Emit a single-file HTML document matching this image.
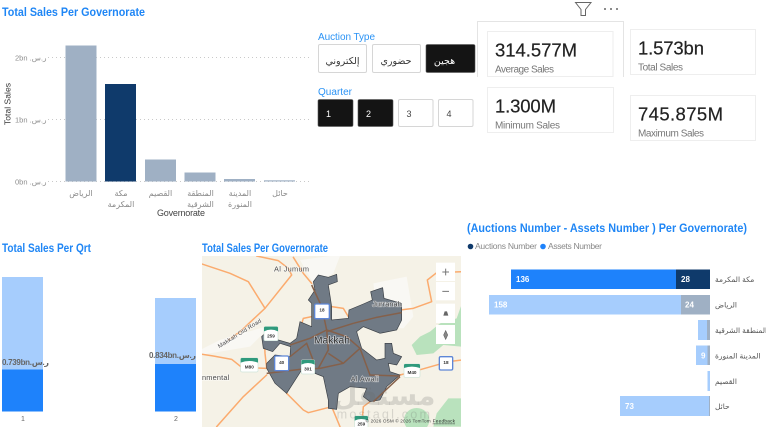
<!DOCTYPE html>
<html><head><meta charset="utf-8">
<style>
html,body{margin:0;padding:0;background:#fff;width:766px;height:430px;overflow:hidden}
svg{display:block}
text{font-family:"Liberation Sans","Noto Sans CJK SC","DejaVu Sans",sans-serif}
.t{font-weight:700;font-size:11.5px;fill:#1f86f5}
.ar{font-size:8px;fill:#8a8a8a}
.big{font-size:18.5px;fill:#222;font-weight:400;stroke:#222;stroke-width:.2}
.sub{font-size:10px;fill:#777}
.card{fill:#fff;stroke:#eeeeee;stroke-width:1}
.btn{fill:#fff;stroke:#d6d6d6;stroke-width:1}
.blk{fill:#141414;stroke:#555;stroke-width:.6}
.road{fill:none;stroke:#fbab6e;stroke-width:4.5;stroke-linejoin:round;stroke-linecap:round}
.in{fill:none;stroke:#85604a;stroke-width:4.5}
</style></head>
<body>
<svg width="766" height="430" viewBox="0 0 766 430" xmlns="http://www.w3.org/2000/svg">
<rect width="766" height="430" fill="#fff"/>

<!-- Chart 1 -->
<text class="t" x="2" y="16" textLength="143" lengthAdjust="spacingAndGlyphs">Total Sales Per Governorate</text>
<g stroke="#c9c9c9" stroke-width="1" stroke-dasharray="1 3">
<line x1="48" x2="311" y1="57.5" y2="57.5"/><line x1="48" x2="311" y1="119.5" y2="119.5"/><line x1="48" x2="311" y1="181.5" y2="181.5"/>
</g>
<g font-size="7.5" fill="#8d8d8d">
<text x="15" y="60.5">2bn .ر.س</text><text x="15" y="122.5">1bn .ر.س</text><text x="15" y="184.5">0bn .ر.س</text>
</g>
<text transform="translate(10.5,125) rotate(-90)" font-size="8.5" fill="#333" textLength="42">Total Sales</text>
<g fill="#9fb0c4">
<rect x="65.5" y="45.5" width="31" height="136"/>
<rect x="145" y="159.5" width="31" height="22"/>
<rect x="184.5" y="172.5" width="31" height="9"/>
<rect x="224" y="179" width="31" height="2.5"/>
<rect x="264" y="180.3" width="31" height="1.2"/>
</g>
<rect x="105" y="84" width="31" height="97.5" fill="#0f3a6b"/>
<g class="ar" text-anchor="middle">
<text x="81" y="196">الرياض</text>
<text x="121" y="196">مكة</text><text x="121" y="207">المكرمة</text>
<text x="160.5" y="196">القصيم</text>
<text x="200.5" y="196">المنطقة</text><text x="200.5" y="207">الشرقية</text>
<text x="240" y="196">المدينة</text><text x="240" y="207">المنورة</text>
<text x="280" y="196">حائل</text>
</g>
<text x="157" y="216" font-size="9" fill="#444" textLength="48">Governorate</text>

<!-- Top icons -->
<path d="M575.5 2.5H591L585.5 9.5V15.5H581V9.5Z" fill="none" stroke="#666" stroke-width="1"/>
<g fill="#666"><circle cx="605" cy="9" r="1"/><circle cx="611" cy="9" r="1"/><circle cx="617" cy="9" r="1"/></g>

<!-- Slicers -->
<text x="318" y="40" font-size="10" fill="#2b93f5" textLength="57">Auction Type</text>
<rect class="btn" x="318.5" y="44.5" width="48" height="28" rx="1.5"/>
<rect class="btn" x="372.5" y="44.5" width="48" height="28" rx="1.5"/>
<rect class="blk" x="426" y="44.5" width="49" height="28" rx="1.5"/>
<g font-size="9.5" text-anchor="middle">
<text x="342.5" y="64" fill="#333">إلكتروني</text>
<text x="396" y="64" fill="#333">حضوري</text>
<text x="444.5" y="64" fill="#fff">هجين</text>
</g>
<text x="318" y="95" font-size="10" fill="#2b93f5" textLength="34">Quarter</text>
<rect class="blk" x="318" y="99.5" width="35" height="27" rx="1.5"/>
<rect class="blk" x="358" y="99.5" width="35" height="27" rx="1.5"/>
<rect class="btn" x="398.5" y="99.5" width="34.5" height="27" rx="1.5"/>
<rect class="btn" x="438.5" y="99.5" width="34.5" height="27" rx="1.5"/>
<g font-size="9" text-anchor="middle">
<text x="328.5" y="117" fill="#fff">1</text><text x="368.5" y="117" fill="#fff">2</text>
<text x="409" y="117" fill="#444">3</text><text x="449" y="117" fill="#444">4</text>
</g>

<!-- Cards -->
<path d="M477.5 77V21.5H623.5V77" fill="none" stroke="#e4e4e4"/>
<rect class="card" x="487.5" y="31.5" width="125.5" height="45"/>
<rect class="card" x="630.5" y="29.5" width="125" height="45"/>
<rect class="card" x="487.5" y="87.5" width="126" height="45"/>
<rect class="card" x="630.5" y="95.5" width="125" height="45"/>
<text class="big" x="495" y="56.500" textLength="82">314.577M</text>
<text class="sub" x="495" y="72.500" textLength="59">Average Sales</text>
<text class="big" x="638" y="54.500" textLength="66">1.573bn</text>
<text class="sub" x="638" y="70.500" textLength="45">Total Sales</text>
<text class="big" x="495" y="112.500" textLength="61">1.300M</text>
<text class="sub" x="495" y="128.500" textLength="65">Minimum Sales</text>
<text class="big" x="638" y="120.500" textLength="85">745.875M</text>
<text class="sub" x="638" y="136.500" textLength="66">Maximum Sales</text>

<!-- Qrt chart -->
<text class="t" x="2" y="252" textLength="89" lengthAdjust="spacingAndGlyphs">Total Sales Per Qrt</text>
<rect x="2" y="277" width="41" height="92.500" fill="#a6cdfd"/>
<rect x="2" y="369.500" width="41" height="42" fill="#1e82fb"/>
<rect x="155" y="298" width="41" height="66" fill="#a6cdfd"/>
<rect x="155" y="364" width="41" height="47.500" fill="#1e82fb"/>
<text x="2" y="365" font-size="8" font-weight="700" fill="#666" textLength="47">0.739bn.ر.س</text>
<text x="149" y="358" font-size="8" font-weight="700" fill="#666" textLength="47">0.834bn.ر.س</text>
<text x="23" y="421" font-size="7" fill="#666" text-anchor="middle">1</text>
<text x="176" y="421" font-size="7" fill="#666" text-anchor="middle">2</text>

<!-- Map -->
<text class="t" x="202" y="252" textLength="126" lengthAdjust="spacingAndGlyphs">Total Sales Per Governorate</text>
<clipPath id="m"><rect x="202" y="256" width="259" height="171"/></clipPath>
<g clip-path="url(#m)">
<rect x="202" y="256" width="259" height="171" fill="#f5f2e7"/>
<g transform="translate(200,240) scale(.33333)">
 <path d="M390 48L420 48 400 100 340 130 300 60ZM520 130L620 110 640 230 610 265 540 260Z" fill="#f9f8f4"/>
 <path d="M0 330L60 300 190 262 200 270 150 320 0 345Z" fill="#f9f8f4"/>
 <path d="M786 190L770 235 720 250 690 275 660 290 635 315 650 345 700 340 730 315 786 320Z" fill="#b9e2bd"/>
 <path d="M786 475L745 475 710 520 700 560 786 560Z" fill="#b9e2bd"/>
 <ellipse cx="650" cy="540" rx="38" ry="36" fill="#b9e2bd"/>
 <!-- orange roads -->
 <path class="road" d="M0 70L90 100 145 125 195 205 275 105 265 85 235 62 170 48"/>
 <path class="road" d="M195 205L120 275 85 300"/>
 <path class="road" d="M280 52L310 100 335 130"/>
 <path class="road" d="M335 230L310 235 295 285 305 300"/>
 <path class="road" d="M395 200L430 205 445 230"/>
 <path class="road" d="M600 210L640 205 695 185 682 120 710 98 786 95"/>
 <path class="road" d="M0 342L40 348 95 358 125 382 200 385"/>
 <path class="road" d="M193 290L195 340 200 385"/>
 <path class="road" d="M200 405L130 470 50 560"/>
 <path class="road" d="M260 460L310 510 325 518 395 500 420 560"/>
 <path class="road" d="M600 405L650 392 745 365 786 360"/>
 <path class="road" d="M510 485L490 500 485 560"/>
 <!-- region -->
 <path d="M340 125L355 105 385 112 410 103 412 125 385 135 395 200 395 240 445 235 447 210 490 192 517 180 512 155 548 143 552 175 605 190 605 240 590 270 540 280 490 260 470 275 485 325 530 360 555 355 555 310 575 310 580 340 605 350 590 375 565 370 570 395 600 405 560 440 540 480 510 485 490 470 500 445 450 440 415 460 410 508 385 505 385 480 370 410 345 400 340 375 305 390 260 460 225 430 200 385 200 370 225 345 270 350 272 320 240 310 218 335 190 325 185 290 210 265 235 300 270 310 290 295 300 245 335 260 335 190 325 180 345 150Z" fill="#707a85" stroke="#3a3f45" stroke-width="2"/>
 <!-- inner roads -->
 <path class="in" d="M335 135L365 200 380 270 385 330 355 385"/>
 <path class="in" d="M380 270L440 290 480 325"/>
 <path class="in" d="M460 250L530 232 605 218"/>
 <path class="in" d="M380 275L460 250"/>
 <path class="in" d="M270 315L330 295 380 270"/>
 <path class="in" d="M270 350L320 310 345 375"/>
 <path class="in" d="M200 400L300 388 360 385 430 370 480 325 510 405 600 408"/>
 <path class="in" d="M385 340L430 370"/>
 <path class="in" d="M600 410L520 485" stroke-width="2.500"/>
 <g font-family="Liberation Sans" stroke="#fff" stroke-width="4" paint-order="stroke" stroke-opacity=".6">
  <text x="342" y="311" font-size="30" fill="#333" textLength="108" lengthAdjust="spacingAndGlyphs">Makkah</text>
  <text x="222" y="94" font-size="22" fill="#4a4a4a" textLength="105">Al Jumum</text>
  <text x="517" y="200" font-size="22" fill="#4a4a4a" textLength="88">Jurranah</text>
  <text x="452" y="425" font-size="22" fill="#4a4a4a" textLength="84">Al Awali</text>
  <text x="6" y="420" font-size="22" fill="#4a4a4a" textLength="82">nmental</text>
  <text transform="translate(58,325) rotate(-32)" font-size="18" fill="#4a4a4a" textLength="150">Makkah Old Road</text>
 </g>
 <!-- shields -->
 <g font-size="14" font-weight="700" text-anchor="middle" fill="#333">
  <rect x="344" y="192" width="44" height="44" rx="4" fill="#fff" stroke="#5d86d6" stroke-width="4"/><text x="366" y="215">18</text>
  <rect x="224" y="348" width="42" height="44" rx="4" fill="#fff" stroke="#5d86d6" stroke-width="4"/><text x="245" y="372">40</text>
  <rect x="718" y="350" width="40" height="40" rx="4" fill="#fff" stroke="#5d86d6" stroke-width="4"/><text x="738" y="372">18</text>
  <rect x="192" y="260" width="42" height="42" rx="4" fill="#fff" stroke="#cfe5da" stroke-width="2"/><path d="M192 274V264a4 4 0 0 1 4-4h34a4 4 0 0 1 4 4v10q-21-10-42 0Z" fill="#2f9a7c"/><text x="213" y="292">259</text>
  <rect x="304" y="360" width="40" height="42" rx="4" fill="#fff" stroke="#cfe5da" stroke-width="2"/><path d="M304 374V364a4 4 0 0 1 4-4h32a4 4 0 0 1 4 4v10q-20-10-40 0Z" fill="#2f9a7c"/><text x="324" y="391">301</text>
  <rect x="122" y="354" width="52" height="42" rx="4" fill="#fff" stroke="#cfe5da" stroke-width="2"/><path d="M122 368V358a4 4 0 0 1 4-4h44a4 4 0 0 1 4 4v10q-26-10-52 0Z" fill="#2f9a7c"/><text x="148" y="385">M80</text>
  <rect x="612" y="372" width="48" height="40" rx="4" fill="#fff" stroke="#cfe5da" stroke-width="2"/><path d="M612 384V376a4 4 0 0 1 4-4h40a4 4 0 0 1 4 4v8q-24-8-48 0Z" fill="#2f9a7c"/><text x="636" y="402">M40</text>
  <rect x="464" y="528" width="40" height="40" rx="4" fill="#fff" stroke="#cfe5da" stroke-width="2"/><path d="M464 542V532a4 4 0 0 1 4-4h32a4 4 0 0 1 4 4v10q-20-10-40 0Z" fill="#2f9a7c"/><text x="484" y="556">259</text>
 </g>
 <!-- controls -->
 <g fill="#fff">
  <rect x="708" y="68" width="57" height="55"/><rect x="708" y="126" width="57" height="55"/>
  <rect x="708" y="191" width="57" height="58"/><rect x="708" y="255" width="57" height="57"/>
 </g>
 <path d="M727 96H747M737 86V106M727 154H747" stroke="#777" stroke-width="3" fill="none"/>
 <path d="M730 227L734 214H741L745 227Z" fill="#666"/>
 <path d="M737 272L743 285 737 298 731 285Z" fill="#888" stroke="#666" stroke-width="2"/>
 <!-- watermark -->
 <text x="553" y="495" font-size="84" font-weight="700" text-anchor="middle" fill="#6b6b6b" fill-opacity=".22">مستقل</text>
 <text x="410" y="535" font-size="38" fill="#6b6b6b" fill-opacity=".22" textLength="280">mostaql.com</text>
 <text x="497" y="548" font-size="14" fill="#444" textLength="195">© 2026 OSM  © 2026 TomTom</text>
 <text x="698" y="548" font-size="14" fill="#222" text-decoration="underline" textLength="67">Feedback</text>
</g>
</g>

<!-- Right chart -->
<text class="t" x="467" y="232" textLength="280" lengthAdjust="spacingAndGlyphs">(Auctions Number - Assets Number ) Per Governorate)</text>
<circle cx="470.500" cy="246.500" r="2.800" fill="#0f3a6b"/>
<text x="475" y="249" font-size="8.500" fill="#888" textLength="62">Auctions Number</text>
<circle cx="543" cy="246.500" r="2.800" fill="#1e82fb"/>
<text x="548" y="249" font-size="8.500" fill="#888" textLength="54">Assets Number</text>
<rect x="511" y="269.500" width="165" height="19.500" fill="#1e82fb"/>
<rect x="676" y="269.500" width="34" height="19.500" fill="#0f3a6b"/>
<rect x="489" y="295" width="192" height="19.500" fill="#a6cdfd"/>
<rect x="681" y="295" width="29" height="19.500" fill="#9fb0c4"/>
<rect x="698" y="320" width="9" height="20" fill="#a6cdfd"/>
<rect x="707" y="320" width="3" height="20" fill="#9fb0c4"/>
<rect x="696" y="345.500" width="11.500" height="19.500" fill="#a6cdfd"/>
<rect x="707.500" y="345.500" width="2.500" height="19.500" fill="#9fb0c4"/>
<rect x="707.500" y="371" width="2.500" height="20" fill="#a6cdfd"/>
<rect x="620" y="396" width="89" height="20" fill="#a6cdfd"/>
<rect x="709" y="396" width="1" height="20" fill="#9fb0c4"/>
<g font-size="8" font-weight="700" fill="#fff">
<text x="516" y="282">136</text><text x="681" y="282">28</text>
<text x="494" y="307.500">158</text><text x="685" y="307.500">24</text>
<text x="701" y="358.500">9</text><text x="625" y="409">73</text>
</g>
<g font-size="7.500" fill="#555">
<text x="715" y="282">مكة المكرمة</text>
<text x="715" y="307.500">الرياض</text>
<text x="715" y="333">المنطقة الشرقية</text>
<text x="715" y="358.500">المدينة المنورة</text>
<text x="715" y="384">القصيم</text>
<text x="715" y="409">حائل</text>
</g>
</svg>
</body></html>
